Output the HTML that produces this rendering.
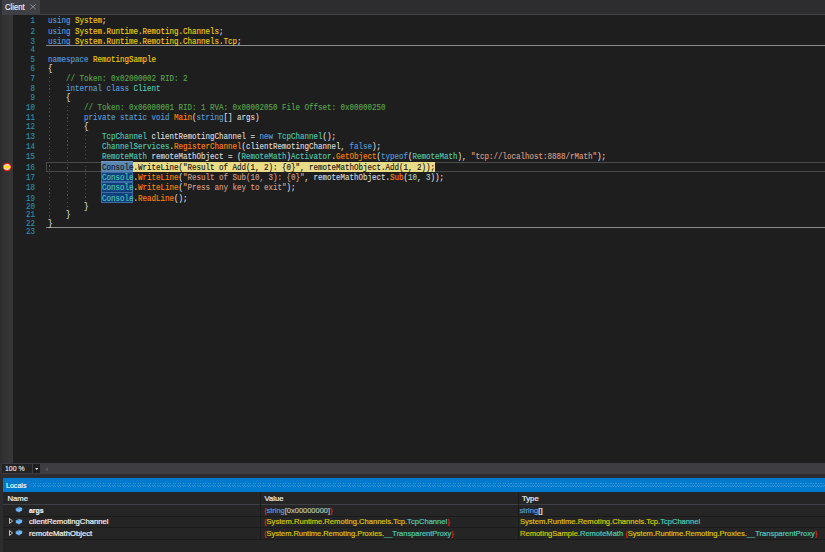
<!DOCTYPE html>
<html><head><meta charset="utf-8">
<style>
*{margin:0;padding:0;box-sizing:border-box}
html,body{width:825px;height:552px;overflow:hidden;background:#2d2d30}
body{position:relative;font-family:"Liberation Sans",sans-serif}
.abs{position:absolute}
#tabstrip{left:0;top:0;width:825px;height:13px;background:#2d2d30}
#tabline{left:2px;top:13.6px;width:823px;height:1.1px;background:#434349}
#tab{left:2px;top:0;width:38px;height:14.5px;background:#3f3f46;color:#f1f1f1;font-size:8.3px;line-height:15.6px;padding-left:2.5px;-webkit-text-stroke:0.15px #f1f1f1}
#tab .x{position:absolute;left:28.3px;top:4.4px;width:6px;height:5.6px}
#editor{left:2px;top:14.5px;width:823px;height:448.2px;background:#1e1e1e}
#margin{left:2px;top:14.5px;width:11.2px;height:448.2px;background:linear-gradient(90deg,#303030,#373737)}
.ln{position:absolute;left:12.4px;width:23px;text-align:right;color:#2b91af;font-family:"Liberation Mono",monospace;font-size:9px;line-height:10px;white-space:pre;transform:scaleX(0.8333);transform-origin:right top;-webkit-text-stroke:0.12px currentColor}
.cl{position:absolute;left:47.9px;color:#dcdcdc;font-family:"Liberation Mono",monospace;font-size:9px;line-height:10px;white-space:pre;transform:scaleX(0.8333);transform-origin:left top;-webkit-text-stroke:0.15px currentColor}
.k{color:#569cd6}.n{color:#f0cf00}.t{color:#4ec9b0}.m{color:#ff8000}.c{color:#57a64a}.s{color:#d69d85}.num{color:#b5cea8}
.hl{color:#141414}
.sep{position:absolute;left:46.2px;width:779px;height:1px;background:#8a8a8a}
.guide{position:absolute;width:1px;background:repeating-linear-gradient(to bottom,var(--g) 0 1.2px,transparent 1.2px 3.85px)}
.box{position:absolute}
#hscroll{left:0;top:462.7px;width:825px;height:11px;background:#3e3e42}
#hsleft{left:0;top:462.7px;width:3px;height:11px;background:#333337}
#zoom{left:2.4px;top:464.2px;width:29.7px;height:9.2px;background:#232324;color:#f1f1f1;font-size:8px;line-height:9.2px;padding-left:3px;-webkit-text-stroke:0.1px #f1f1f1}
#zdd{left:33px;top:464.2px;width:7px;height:9px;background:#1e1e1e}
#zdd svg{position:absolute;left:1.8px;top:3.9px}
#hsarrow{left:44.6px;top:466.7px}
#panel{left:2.5px;top:478px;width:822.5px;height:74px;background:#252526}
#ptitle{left:2.5px;top:478.3px;width:822.5px;height:13.5px;background:#007acc;color:#fff;font-size:7.95px;line-height:16.9px;padding-left:3.1px;-webkit-text-stroke:0.15px #fff}
#grip{left:32.9px;top:483.3px;width:792px;height:4px;background-image:repeating-linear-gradient(90deg,rgba(255,255,255,.2) 0 1px,transparent 1px 2.5px),repeating-linear-gradient(90deg,transparent 0 1.25px,rgba(255,255,255,.2) 1.25px 2.25px,transparent 2.25px 2.5px),repeating-linear-gradient(90deg,rgba(255,255,255,.2) 0 1px,transparent 1px 2.5px);background-size:100% 1px,100% 1px,100% 1px;background-position:0 0,0 1.5px,0 3px;background-repeat:no-repeat}
.prow{position:absolute;left:2.5px;width:822.5px;font-size:7.7px;-webkit-text-stroke:0.2px currentColor;color:#f1f1f1;white-space:pre}
.pcell{position:absolute;top:0;white-space:pre;line-height:11px}
.vsep{position:absolute;width:1px;background:#1b1b1c}
.hsep{position:absolute;left:2.5px;width:822.5px;height:1px;background:#1b1b1c}
.br{color:#e0201a}.kw{color:#569cd6}.ns{color:#d8c400}.ty{color:#4ec9b0}.gr{color:#b8c8b0}
</style></head><body>
<div id="tabstrip" class="abs"></div>
<div id="tabline" class="abs"></div>
<div id="tab" class="abs"><span style="display:inline-block;transform:scaleX(0.92);transform-origin:left top">Client</span><svg class="x" viewBox="0 0 6 5.5"><path d="M0.3 0.3L5.7 5.2M5.7 0.3L0.3 5.2" stroke="#8e8e8e" stroke-width="0.95" fill="none"/></svg></div>
<div id="editor" class="abs"></div>
<div id="margin" class="abs"></div>

<div class="sep" style="top:44.8px"></div>
<div class="sep" style="top:226.8px"></div>
<div class="guide" style="left:49px;top:72.8px;height:143.8px;--g:#4e4e4e"></div>
<div class="guide" style="left:67px;top:101.7px;height:109px;--g:#1f6550"></div>
<div class="guide" style="left:85px;top:130.9px;height:70.2px;--g:#1f5282"></div>
<div class="box" style="left:46.4px;top:161.6px;width:790px;height:10px;border:1px solid #4a4a4a"></div>
<div class="box" style="left:133px;top:161.5px;width:302px;height:10.3px;background:#eadb86"></div>
<div class="box" style="left:101.2px;top:161.3px;width:31.9px;height:10.5px;background:#5b87b3;border-top:1px solid #7198c0"></div>
<div class="box" style="left:101.2px;top:171.8px;width:31.9px;height:10.7px;background:#0f3f7d;border:1px solid #3d6ba3"></div>
<div class="box" style="left:101.2px;top:181.9px;width:31.9px;height:11.1px;background:#0f3f7d;border:1px solid #3d6ba3"></div>
<div class="box" style="left:101.2px;top:192.4px;width:31.9px;height:11.0px;background:#0f3f7d;border:1px solid #3d6ba3"></div>
<svg class="abs" style="left:2px;top:161.5px" width="10" height="10" viewBox="0 0 10 10"><circle cx="5.05" cy="5.05" r="3.75" fill="#f5b0a8" stroke="#e8160c" stroke-width="1.1"/><path d="M1.9 3.7H5V2.3L8.8 5.05L5 7.8V6.4H1.9Z" fill="#ffd800" stroke="#fbf4dc" stroke-width="0.5"/></svg>
<div class="ln" style="top:15.7px">1</div>
<div class="cl" style="top:15.7px"><span class="k">using</span> <span class="n">System</span>;</div>
<div class="ln" style="top:26.8px">2</div>
<div class="cl" style="top:26.8px"><span class="k">using</span> <span class="n">System.Runtime.Remoting.Channels</span>;</div>
<div class="ln" style="top:37.2px">3</div>
<div class="cl" style="top:37.2px"><span class="k">using</span> <span class="n">System.Runtime.Remoting.Channels.Tcp</span>;</div>
<div class="ln" style="top:45.3px">4</div>
<div class="ln" style="top:55.4px">5</div>
<div class="cl" style="top:55.4px"><span class="k">namespace</span> <span class="n">RemotingSample</span></div>
<div class="ln" style="top:64.3px">6</div>
<div class="cl" style="top:64.3px">{</div>
<div class="ln" style="top:73.8px">7</div>
<div class="cl" style="top:73.8px">    <span class="c">// Token: 0x02000002 RID: 2</span></div>
<div class="ln" style="top:83.6px">8</div>
<div class="cl" style="top:83.6px">    <span class="k">internal</span> <span class="k">class</span> <span class="t">Client</span></div>
<div class="ln" style="top:92.8px">9</div>
<div class="cl" style="top:92.8px">    {</div>
<div class="ln" style="top:102.5px">10</div>
<div class="cl" style="top:102.5px">        <span class="c">// Token: 0x06000001 RID: 1 RVA: 0x00002050 File Offset: 0x00000250</span></div>
<div class="ln" style="top:112.8px">11</div>
<div class="cl" style="top:112.8px">        <span class="k">private</span> <span class="k">static</span> <span class="k">void</span> <span class="m">Main</span>(<span class="k">string</span>[] args)</div>
<div class="ln" style="top:121.7px">12</div>
<div class="cl" style="top:121.7px">        {</div>
<div class="ln" style="top:132.2px">13</div>
<div class="cl" style="top:132.2px">            <span class="t">TcpChannel</span> clientRemotingChannel = <span class="k">new</span> <span class="t">TcpChannel</span>();</div>
<div class="ln" style="top:141.9px">14</div>
<div class="cl" style="top:141.9px">            <span class="t">ChannelServices</span>.<span class="m">RegisterChannel</span>(clientRemotingChannel, <span class="k">false</span>);</div>
<div class="ln" style="top:152.1px">15</div>
<div class="cl" style="top:152.1px">            <span class="t">RemoteMath</span> remoteMathObject = (<span class="t">RemoteMath</span>)<span class="t">Activator</span>.<span class="m">GetObject</span>(<span class="k">typeof</span>(<span class="t">RemoteMath</span>), <span class="s">&quot;tcp://localhost:8888/rMath&quot;</span>);</div>
<div class="ln" style="top:163.1px">16</div>
<div class="cl" style="top:163.1px">            <span class="hl">Console</span><span class="hl">.WriteLine(&quot;Result of Add(1, 2): {0}&quot;, remoteMathObject.Add(1, 2));</span></div>
<div class="ln" style="top:173.2px">17</div>
<div class="cl" style="top:173.2px">            <span class="t">Console</span>.<span class="m">WriteLine</span>(<span class="s">&quot;Result of Sub(10, 3): {0}&quot;</span>, remoteMathObject.<span class="m">Sub</span>(<span class="num">10</span>, <span class="num">3</span>));</div>
<div class="ln" style="top:183.1px">18</div>
<div class="cl" style="top:183.1px">            <span class="t">Console</span>.<span class="m">WriteLine</span>(<span class="s">&quot;Press any key to exit&quot;</span>);</div>
<div class="ln" style="top:194.2px">19</div>
<div class="cl" style="top:194.2px">            <span class="t">Console</span>.<span class="m">ReadLine</span>();</div>
<div class="ln" style="top:201.8px">20</div>
<div class="cl" style="top:201.8px">        }</div>
<div class="ln" style="top:210.1px">21</div>
<div class="cl" style="top:210.1px">    }</div>
<div class="ln" style="top:219.2px">22</div>
<div class="cl" style="top:219.2px">}</div>
<div class="ln" style="top:226.7px">23</div>

<div id="hscroll" class="abs"></div>
<div id="hsleft" class="abs"></div>
<div id="zoom" class="abs"><span style="display:inline-block;transform:scaleX(0.86);transform-origin:left top">100 %</span></div>
<div id="zdd" class="abs"><svg width="3.4" height="2" viewBox="0 0 3.4 2"><path d="M0 0H3.4L1.7 2Z" fill="#e0e0e0"/></svg></div>
<svg id="hsarrow" class="abs" width="3.2" height="4.4" viewBox="0 0 3.2 4.4"><path d="M3.2 0V4.4L0 2.2Z" fill="#58585c"/></svg>
<div id="panel" class="abs"></div>
<div id="ptitle" class="abs"><span style="display:inline-block;transform:scaleX(0.89);transform-origin:left top">Locals</span></div>
<div id="grip" class="abs"></div>

<div class="hsep" style="top:504px;background:#3f3f46"></div>
<div class="hsep" style="top:515.6px"></div>
<div class="hsep" style="top:526.8px"></div>
<div class="hsep" style="top:538.6px"></div>
<div class="vsep" style="left:260px;top:492px;height:47px;background:#1b1b1c"></div>
<div class="vsep" style="left:517.5px;top:492px;height:47px;background:#1b1b1c"></div>
<div class="prow" style="top:492.6px"><div class="pcell" style="left:5.0px">Name</div><div class="pcell" style="left:262.0px">Value</div><div class="pcell" style="left:519.5px">Type</div></div>
<svg class="abs" style="left:15.4px;top:506px" width="8" height="7" viewBox="0 0 8 7"><path d="M0.6 2.4L4 0.6L7.4 2V4.6L4 6.5L0.6 4.9Z" fill="#75beff" stroke="#161616" stroke-width="0.45"/><path d="M2.6 2.6L4.6 1.6" stroke="#1e3a5a" stroke-width="0.7"/><path d="M0.6 2.4L4 4.1L7.4 2M4 4.1V6.5" stroke="#5aa0e0" stroke-width="0.4" fill="none"/></svg>
<svg class="abs" style="left:15.4px;top:517.6px" width="8" height="7" viewBox="0 0 8 7"><path d="M0.6 2.4L4 0.6L7.4 2V4.6L4 6.5L0.6 4.9Z" fill="#75beff" stroke="#161616" stroke-width="0.45"/><path d="M2.6 2.6L4.6 1.6" stroke="#1e3a5a" stroke-width="0.7"/><path d="M0.6 2.4L4 4.1L7.4 2M4 4.1V6.5" stroke="#5aa0e0" stroke-width="0.4" fill="none"/></svg>
<svg class="abs" style="left:8.6px;top:518.4px" width="4" height="6" viewBox="0 0 4 6"><path d="M0.5 0.5L3.5 3L0.5 5.5Z" fill="none" stroke="#e6e6e6" stroke-width="0.8"/></svg>
<svg class="abs" style="left:15.4px;top:529px" width="8" height="7" viewBox="0 0 8 7"><path d="M0.6 2.4L4 0.6L7.4 2V4.6L4 6.5L0.6 4.9Z" fill="#75beff" stroke="#161616" stroke-width="0.45"/><path d="M2.6 2.6L4.6 1.6" stroke="#1e3a5a" stroke-width="0.7"/><path d="M0.6 2.4L4 4.1L7.4 2M4 4.1V6.5" stroke="#5aa0e0" stroke-width="0.4" fill="none"/></svg>
<svg class="abs" style="left:8.6px;top:529.8px" width="4" height="6" viewBox="0 0 4 6"><path d="M0.5 0.5L3.5 3L0.5 5.5Z" fill="none" stroke="#e6e6e6" stroke-width="0.8"/></svg>
<div class="prow" style="top:504.6px"><div class="pcell" style="left:26.5px"><b style="display:inline-block;transform:scaleX(0.9);transform-origin:left top">args</b></div><div class="pcell" style="left:261.5px;transform:scaleX(0.971);transform-origin:left top"><span class="br">{</span><span class="kw">string</span><span class="gr">[0x00000000]</span><span class="br">}</span></div><div class="pcell" style="left:517.0px"><span class="kw">string</span>[]</div></div>
<div class="prow" style="top:516px"><div class="pcell" style="left:26.5px">clientRemotingChannel</div><div class="pcell" style="left:261.5px;transform:scaleX(0.988);transform-origin:left top"><span class="br">{</span><span class="ns">System.Runtime.Remoting.Channels.Tcp.</span><span class="ty">TcpChannel</span><span class="br">}</span></div><div class="pcell" style="left:517.0px;transform:scaleX(0.985);transform-origin:left top"><span class="ns">System.Runtime.Remoting.Channels.Tcp.</span><span class="ty">TcpChannel</span></div></div>
<div class="prow" style="top:528px"><div class="pcell" style="left:26.5px">remoteMathObject</div><div class="pcell" style="left:261.5px;transform:scaleX(0.969);transform-origin:left top"><span class="br">{</span><span class="ns">System.Runtime.Remoting.Proxies.</span><span class="ty">__TransparentProxy</span><span class="br">}</span></div><div class="pcell" style="left:517.0px;transform:scaleX(0.981);transform-origin:left top"><span class="ns">RemotingSample.</span><span class="ty">RemoteMath</span> <span class="br">{</span><span class="ns">System.Runtime.Remoting.Proxies.</span><span class="ty">__TransparentProxy</span><span class="br">}</span></div></div>
</body></html>
